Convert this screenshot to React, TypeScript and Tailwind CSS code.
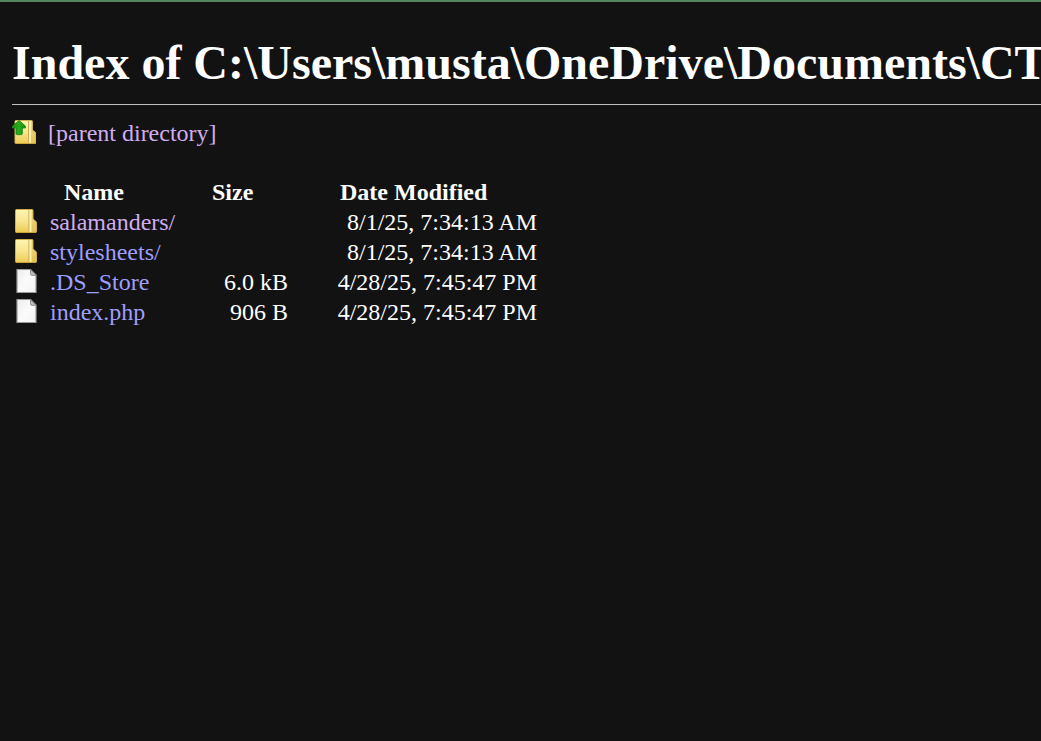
function FolderShape() {
  return (
    <>
      <defs>
        <linearGradient id="body" x1="0" y1="0" x2="0" y2="1">
          <stop offset="0" stopColor="#fcf5ae" />
          <stop offset="0.5" stopColor="#f8e590" />
          <stop offset="1" stopColor="#edcd55" />
        </linearGradient>
        <linearGradient id="side" x1="0" y1="0" x2="0" y2="1">
          <stop offset="0" stopColor="#f2dd8c" />
          <stop offset="1" stopColor="#e4c050" />
        </linearGradient>
      </defs>
      <path
        d="M2.5 .5h15.500q1 0 1 1V10l3 2.5q.5.5.5 1.500v8.500q0 1-1 1H2.500q-1 0-1-1v-21q0-1 1-1z"
        fill="url(#side)"
        stroke="#d0ae4c"
      />
      <path d="M2 1h12.500v22H2z" fill="url(#body)" />
      <path d="M15 1v22" stroke="#cfae52" />
      <path d="M16.500 1v22" stroke="#fbf0b0" strokeWidth="2" />
      <path d="M2 23.500h20" stroke="#cda438" />
    </>
  );
}

function Folder() {
  return (
    <svg className="mt-0.5 h-6 w-6 shrink-0" viewBox="0 0 24 24" aria-hidden="true">
      <FolderShape />
    </svg>
  );
}

function ParentFolder() {
  return (
    <svg className="mt-0.5 h-6 w-6 shrink-0" viewBox="0 0 24 24" aria-hidden="true">
      <defs>
        <linearGradient id="arrow" x1="0" y1="0" x2="1" y2="0">
          <stop offset="0" stopColor="#128f0c" />
          <stop offset="0.5" stopColor="#2cab1e" />
          <stop offset="1" stopColor="#128f0c" />
        </linearGradient>
      </defs>
      <g transform="translate(1.500 0)">
        <FolderShape />
      </g>
      <path
        d="M7.200 .4L.5 6v2h3.500v5.500q0 1.200 1.200 1.200h4q1.200 0 1.200-1.200V8h3V6z"
        fill="url(#arrow)"
        stroke="#1b861a"
        strokeWidth=".8"
        strokeLinejoin="round"
      />
    </svg>
  );
}

function File() {
  return (
    <svg className="mt-0.5 h-6 w-6 shrink-0" viewBox="0 0 24 24" aria-hidden="true">
      <defs>
        <linearGradient id="paper" x1="0" y1="0" x2="1" y2="1">
          <stop offset="0" stopColor="#ececec" />
          <stop offset="0.5" stopColor="#fbfbfb" />
          <stop offset="1" stopColor="#f2f2f2" />
        </linearGradient>
      </defs>
      <path d="M3 .5h13.500l5.500 5.500v17.500H3z" fill="url(#paper)" stroke="#9c9c9c" strokeWidth="1.200" />
      <path d="M16.500 .8v4q0 1.500 1.500 1.500h4z" fill="#c4c4c4" stroke="#8a8a8a" strokeLinejoin="round" />
    </svg>
  );
}

const entries = [
  { name: "salamanders/", size: "", date: "8/1/25, 7:34:13 AM", folder: true, visited: true },
  { name: "stylesheets/", size: "", date: "8/1/25, 7:34:13 AM", folder: true, visited: false },
  { name: ".DS_Store", size: "6.0 kB", date: "4/28/25, 7:45:47 PM", folder: false, visited: false },
  { name: "index.php", size: "906 B", date: "4/28/25, 7:45:47 PM", folder: false, visited: false },
];

export default function App() {
  return (
    <div className="min-h-screen overflow-x-hidden border-t-2 border-[#548560] bg-[#121212] px-3 pt-[34px] font-['Liberation_Serif',serif] text-2xl text-white">
      <h1 className="-mr-3 border-b border-[#c0c0c0] pb-3.5 text-5xl leading-[54px] font-bold whitespace-nowrap">
        Index of C:\Users\musta\OneDrive\Documents\CTEC
      </h1>
      <a href="#parent" className="mt-[13px] flex w-fit items-start gap-3 leading-[30px] text-[#d0adf0]">
        <ParentFolder />
        [parent directory]
      </a>
      <table className="mt-[29px] border-collapse leading-[30px]">
        <thead>
          <tr className="text-left">
            <th className="w-[200px] p-0 pl-[52px] font-bold">Name</th>
            <th className="w-[76px] p-0 font-bold">Size</th>
            <th className="w-[249px] p-0 pl-[52px] font-bold">Date Modified</th>
          </tr>
        </thead>
        <tbody>
          {entries.map((e) => (
            <tr key={e.name}>
              <td className="p-0">
                <a
                  href={`#${e.name}`}
                  className={`flex items-start gap-3 pl-0.5 ${e.visited ? "text-[#d0adf0]" : "text-[#9e9eff]"}`}
                >
                  {e.folder ? <Folder /> : <File />}
                  {e.name}
                </a>
              </td>
              <td className="p-0 text-right">{e.size}</td>
              <td className="p-0 text-right">{e.date}</td>
            </tr>
          ))}
        </tbody>
      </table>
    </div>
  );
}
